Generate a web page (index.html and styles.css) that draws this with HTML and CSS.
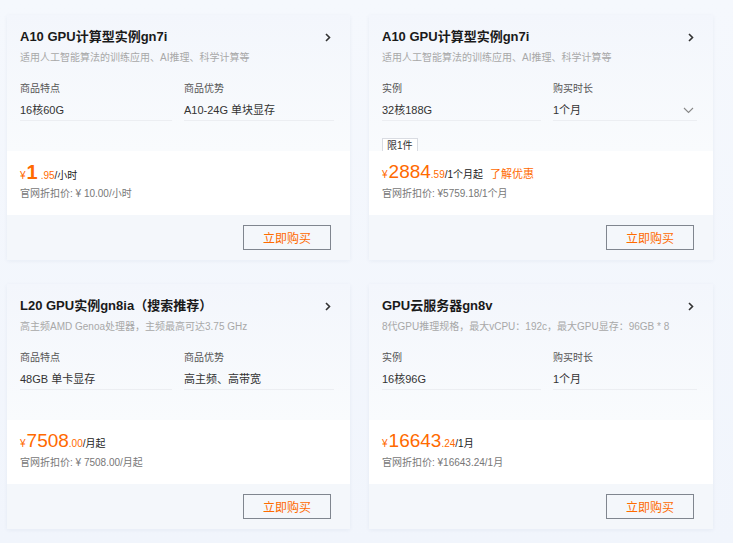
FILE: index.html
```html
<!doctype html>
<html>
<head>
<meta charset="utf-8" />
<meta name="viewport" content="width=device-width" />
<title>GPU 实例</title>
<link rel="stylesheet" href="styles.css">
</head>
<body>

<div class="grid">

  <div class="card">
    <div class="card-top">
      <div class="card-head">
        <h2 class="card-title">A10 GPU计算型实例gn7i</h2>
        <svg class="arrow" width="6" height="9" viewBox="0 0 6 9"><path d="M1 1l3.5 3.5L1 8" fill="none" stroke="#333" stroke-width="1.6"/></svg>
      </div>
      <p class="card-desc">适用人工智能算法的训练应用、AI推理、科学计算等</p>
      <div class="specs">
        <div class="spec">
          <div class="spec-label">商品特点</div>
          <div class="spec-value">16核60G</div>
        </div>
        <div class="spec">
          <div class="spec-label">商品优势</div>
          <div class="spec-value">A10-24G 单块显存</div>
        </div>
      </div>
    </div>
    <div class="card-price">
      <div class="price">
        <span class="price-sign">¥</span><span class="price-num price-num--bold">1</span><span class="price-dec">.95</span><span class="price-unit">/小时</span>
      </div>
      <div class="price-orig">官网折扣价: ¥ 10.00/小时</div>
    </div>
    <div class="card-foot"><button class="buy">立即购买</button></div>
  </div>

  <div class="card">
    <div class="card-top">
      <div class="card-head">
        <h2 class="card-title">A10 GPU计算型实例gn7i</h2>
        <svg class="arrow" width="6" height="9" viewBox="0 0 6 9"><path d="M1 1l3.5 3.5L1 8" fill="none" stroke="#333" stroke-width="1.6"/></svg>
      </div>
      <p class="card-desc">适用人工智能算法的训练应用、AI推理、科学计算等</p>
      <div class="specs specs--select">
        <div class="spec">
          <div class="spec-label">实例</div>
          <div class="spec-value">32核188G</div>
        </div>
        <div class="spec">
          <div class="spec-label">购买时长</div>
          <div class="spec-value spec-value--drop">1个月
            <svg width="11" height="7" viewBox="0 0 11 7"><path d="M1 1l4.5 4.5L10 1" fill="none" stroke="#888" stroke-width="1.1"/></svg>
          </div>
        </div>
      </div>
      <span class="tag">限1件</span>
    </div>
    <div class="card-price">
      <div class="price">
        <span class="price-sign">¥</span><span class="price-num">2884</span><span class="price-dec">.59</span><span class="price-unit">/1个月起</span><a class="price-link">了解优惠</a>
      </div>
      <div class="price-orig">官网折扣价: ¥5759.18/1个月</div>
    </div>
    <div class="card-foot"><button class="buy">立即购买</button></div>
  </div>

  <div class="card">
    <div class="card-top">
      <div class="card-head">
        <h2 class="card-title">L20 GPU实例gn8ia（搜索推荐）</h2>
        <svg class="arrow" width="6" height="9" viewBox="0 0 6 9"><path d="M1 1l3.5 3.5L1 8" fill="none" stroke="#333" stroke-width="1.6"/></svg>
      </div>
      <p class="card-desc">高主频AMD Genoa处理器，主频最高可达3.75 GHz</p>
      <div class="specs">
        <div class="spec">
          <div class="spec-label">商品特点</div>
          <div class="spec-value">48GB 单卡显存</div>
        </div>
        <div class="spec">
          <div class="spec-label">商品优势</div>
          <div class="spec-value">高主频、高带宽</div>
        </div>
      </div>
    </div>
    <div class="card-price">
      <div class="price">
        <span class="price-sign">¥</span><span class="price-num">7508</span><span class="price-dec">.00</span><span class="price-unit">/月起</span>
      </div>
      <div class="price-orig">官网折扣价: ¥ 7508.00/月起</div>
    </div>
    <div class="card-foot"><button class="buy">立即购买</button></div>
  </div>

  <div class="card">
    <div class="card-top">
      <div class="card-head">
        <h2 class="card-title">GPU云服务器gn8v</h2>
        <svg class="arrow" width="6" height="9" viewBox="0 0 6 9"><path d="M1 1l3.5 3.5L1 8" fill="none" stroke="#333" stroke-width="1.6"/></svg>
      </div>
      <p class="card-desc">8代GPU推理规格，最大vCPU：192c，最大GPU显存：96GB * 8</p>
      <div class="specs specs--select">
        <div class="spec">
          <div class="spec-label">实例</div>
          <div class="spec-value">16核96G</div>
        </div>
        <div class="spec">
          <div class="spec-label">购买时长</div>
          <div class="spec-value">1个月</div>
        </div>
      </div>
    </div>
    <div class="card-price">
      <div class="price">
        <span class="price-sign">¥</span><span class="price-num">16643</span><span class="price-dec">.24</span><span class="price-unit">/1月</span>
      </div>
      <div class="price-orig">官网折扣价: ¥16643.24/1月</div>
    </div>
    <div class="card-foot"><button class="buy">立即购买</button></div>
  </div>

</div>

</body>
</html>
```

FILE: styles.css
```css
* { box-sizing: border-box; }

body {
  margin: 0;
  padding: 15px 20px 0 7px;
  background: linear-gradient(180deg, #f5f8fd 0, #f1f5fc 100%);
  min-height: 543px;
  font-family: "Liberation Sans", "Noto Sans CJK SC", sans-serif;
  color: #333;
}

.grid {
  display: grid;
  grid-template-columns: 343px 344px;
  column-gap: 19px;
  row-gap: 24px;
}

.card {
  display: flex;
  flex-direction: column;
  height: 245px;
  background: #fff;
  box-shadow: 0 1px 4px rgba(40, 70, 120, 0.06);
}

.card-top {
  height: 136px;
  padding: 14px 16px 0 13px;
  background: linear-gradient(180deg, #f3f6fc 0, #f9fbfd 100%);
}

.card-head {
  display: flex;
  align-items: center;
  justify-content: space-between;
  height: 16px;
}

.card-title {
  margin: 0;
  font-size: 13px;
  font-weight: 600;
  color: #1a1a1a;
  line-height: 16px;
}

.arrow { margin-right: 3px; }

.card-desc {
  margin: 6px 0 0;
  font-size: 10px;
  line-height: 14px;
  color: #a8a8a8;
}

.specs {
  display: grid;
  grid-template-columns: 152px 1fr;
  column-gap: 12px;
  margin-top: 17px;
}

.specs--select { grid-template-columns: 159px 1fr; }

.spec { border-bottom: 1px solid #eceef2; padding-bottom: 3px; }

.spec-label {
  font-size: 10px;
  line-height: 14px;
  color: #555;
}

.spec-value {
  margin-top: 7px;
  font-size: 11px;
  line-height: 14px;
  color: #333;
}

.spec-value--drop {
  display: flex;
  justify-content: space-between;
  align-items: center;
  padding-right: 3px;
}

.tag {
  display: inline-block;
  margin-top: 17px;
  padding: 0 4px;
  font-size: 10px;
  line-height: 13px;
  color: #333;
  border: 1px solid #d9dce2;
  background: #fff;
}

.card-price {
  flex: 1;
  padding: 11px 13px 0;
  background: #fff;
}

.price {
  display: flex;
  align-items: baseline;
  height: 20px;
  color: #ff6a00;
}

.price-sign { font-size: 10px; margin-right: 1px; }

.price-num { font-size: 19px; line-height: 20px; }

.price-num--bold { font-weight: bold; font-size: 20px; margin-right: 3px; }

.price-dec { font-size: 10px; }

.price-unit { font-size: 10px; color: #222; }

.price-link {
  margin-left: 7px;
  font-size: 11px;
  color: #ff6a00;
}

.price-orig {
  margin-top: 5px;
  font-size: 10px;
  line-height: 14px;
  color: #777;
}

.card-foot {
  display: flex;
  justify-content: flex-end;
  align-items: center;
  height: 45px;
  padding-right: 19px;
  background: #f4f7fb;
}

.buy {
  width: 88px;
  height: 25px;
  padding: 0;
  font-family: inherit;
  font-size: 12px;
  color: #ff6a00;
  background: transparent;
  border: 1px solid #80868f;
}
```
